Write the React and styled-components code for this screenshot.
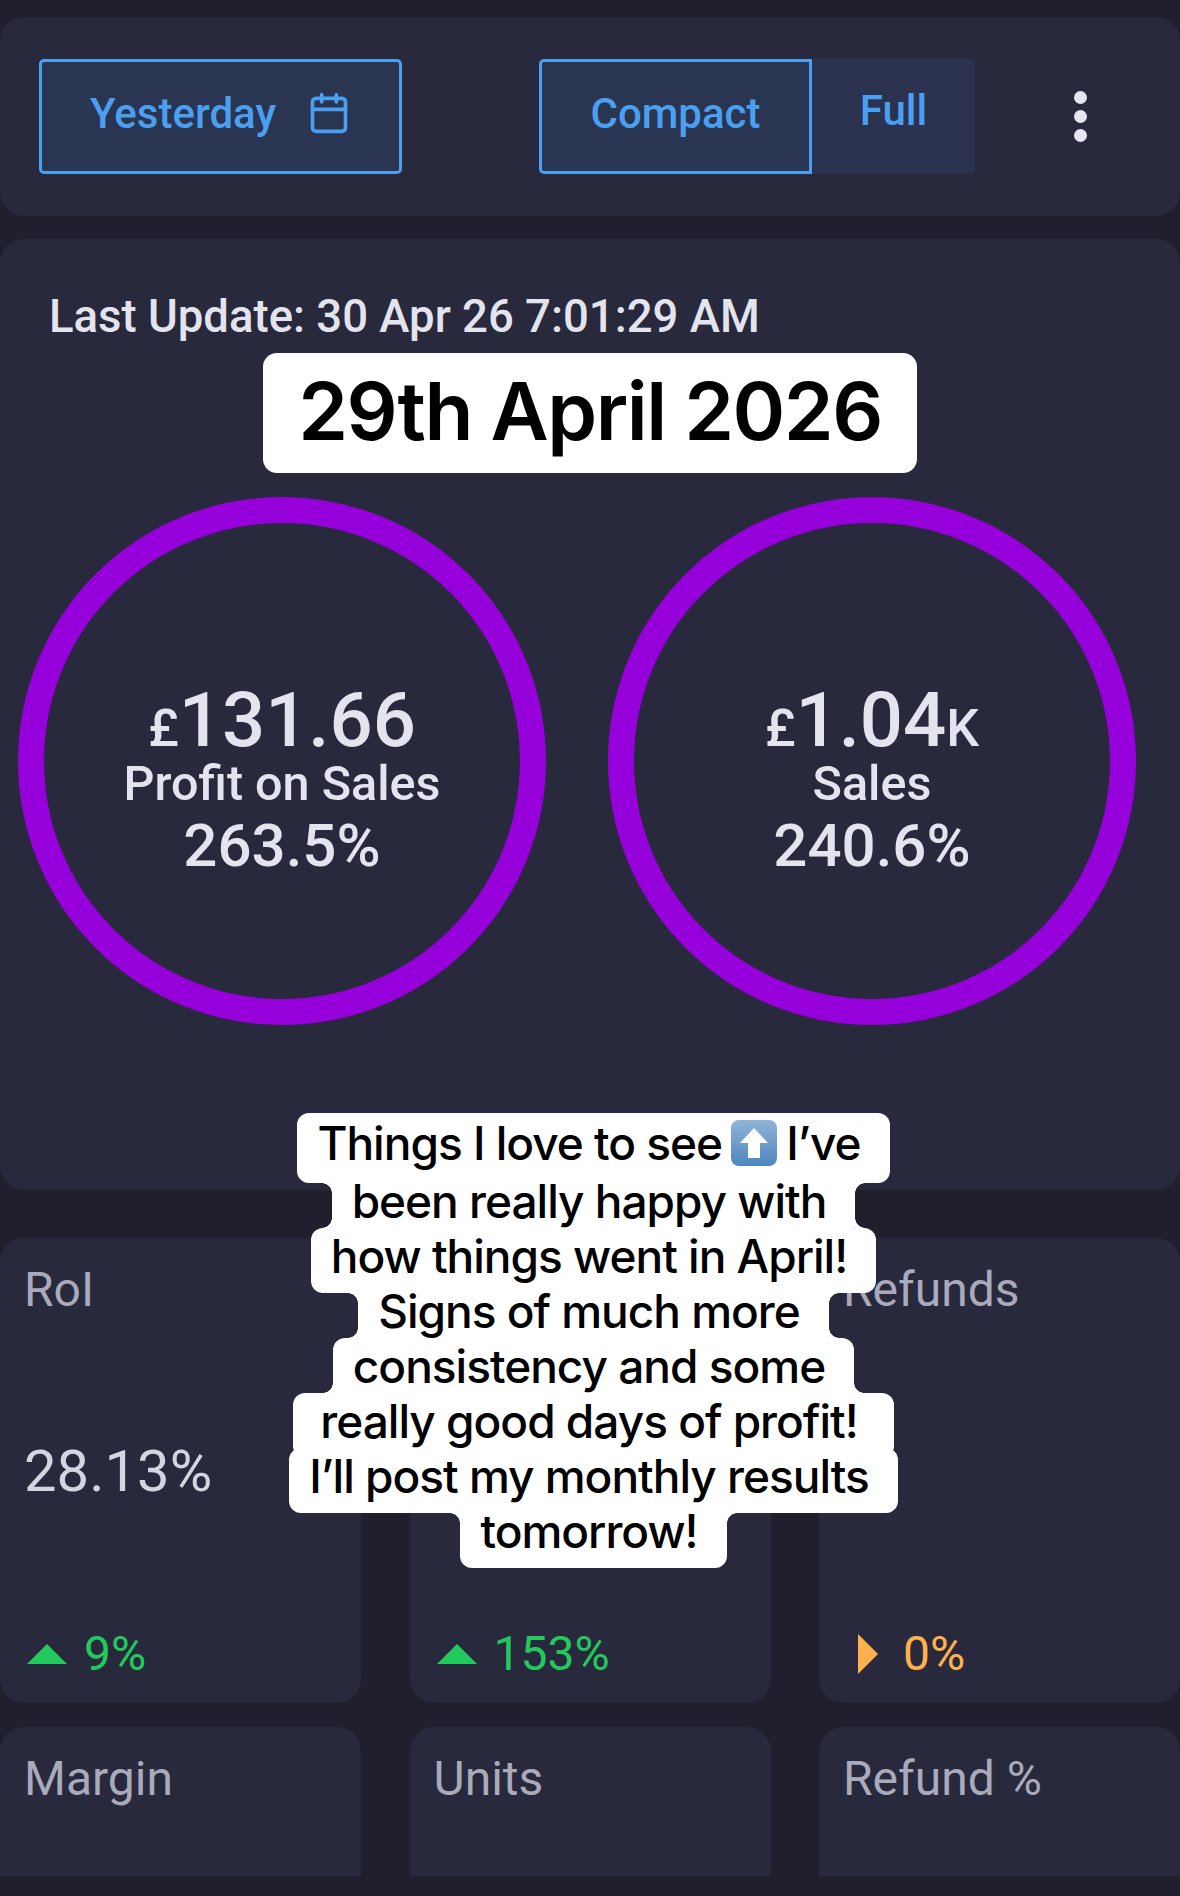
import React from 'react';
import styled, { createGlobalStyle, css } from 'styled-components';
import { Calendar } from 'lucide-react';

const GlobalStyle = createGlobalStyle`
  html, body {
    margin: 0;
    padding: 0;
    background: #1f1f2e;
    font-family: Roboto, "Liberation Sans", sans-serif;
  }
`;

const Page = styled.div`
  position: relative;
  width: 1180px;
  height: 1896px;
  overflow: hidden;
  padding-top: 17px;
  box-sizing: border-box;
`;

const TopBar = styled.div`
  height: 199px;
  background: #28293c;
  border-radius: 24px;
  display: flex;
  align-items: center;
  padding: 0 0 0 39px;
  margin-bottom: 23px;
  box-sizing: border-box;
`;

const RangeButton = styled.div`
  width: 363px;
  height: 115px;
  box-sizing: border-box;
  border: 3px solid #4da0f0;
  border-radius: 5px;
  background: #2a3552;
  color: #4a9ff0;
  font-size: 42px;
  font-weight: 500;
  display: flex;
  align-items: center;
  gap: 31px;
  padding: 0 0 7px 48px;
`;

const Toggle = styled.div`
  display: flex;
  margin-left: 137px;
`;

const ToggleItem = styled.div`
  height: 115px;
  box-sizing: border-box;
  width: ${(p) => (p.$active ? '273px' : '163px')};
  border: ${(p) => (p.$active ? '3px solid #4da0f0' : 'none')};
  border-radius: ${(p) => (p.$active ? '5px 0 0 5px' : '0 5px 5px 0')};
  background: ${(p) => (p.$active ? '#2a3552' : '#2b3250')};
  color: #4a9ff0;
  font-size: 42px;
  font-weight: 500;
  display: flex;
  justify-content: center;
  align-items: center;
  padding-bottom: ${(p) => (p.$active ? '7px' : '12px')};
`;

const MoreDots = styled.div`
  margin-left: 99px;
  display: flex;
  flex-direction: column;
  gap: 6px;
  span {
    width: 13px;
    height: 13px;
    border-radius: 50%;
    background: #e6e6f0;
  }
`;

const Overview = styled.div`
  position: relative;
  height: 951px;
  background: #28293c;
  border-radius: 24px;
  padding: 53px 0 0 49px;
  margin-bottom: 48px;
  box-sizing: border-box;
`;

const LastUpdate = styled.div`
  color: #e4e4ee;
  font-size: 45.5px;
  font-weight: 500;
  line-height: 50px;
`;

const DateBadge = styled.div`
  position: absolute;
  top: 114px;
  left: 263px;
  width: 654px;
  height: 120px;
  padding-bottom: 6px;
  box-sizing: border-box;
  background: #fff;
  border-radius: 14px;
  color: #000;
  font-family: Inter, "Liberation Sans", sans-serif;
  font-size: 80px;
  font-weight: 600;
  letter-spacing: -1.5px;
  display: flex;
  align-items: center;
  justify-content: center;
`;

const Rings = styled.div`
  display: flex;
  gap: 62px;
  margin: 155px 0 0 -31px;
`;

const Ring = styled.div`
  width: 528px;
  height: 528px;
  box-sizing: border-box;
  border: 26px solid #9600da;
  border-radius: 50%;
  display: flex;
  flex-direction: column;
  align-items: center;
  justify-content: center;
  padding-top: 38px;
  color: #e4e4ee;
`;

const Amount = styled.div`
  font-size: 76px;
  font-weight: 500;
  line-height: 70px;
  position: relative;
  top: 6px;
  small {
    font-size: 52px;
  }
`;

const RingLabel = styled.div`
  font-size: 48.5px;
  font-weight: 500;
  line-height: 52px;
`;

const RingPercent = styled.div`
  font-size: 60px;
  font-weight: 500;
  line-height: 72px;
`;

const MetricGrid = styled.div`
  display: grid;
  grid-template-columns: 361px 361px 361px;
  grid-template-rows: 465px 149px;
  column-gap: 48.5px;
  row-gap: 24px;
`;

const MetricCard = styled.div`
  background: #28293c;
  border-radius: ${(p) => (p.$cut ? '24px 24px 0 0' : '24px')};
  padding: 23px 24px 0;
  box-sizing: border-box;
  display: flex;
  flex-direction: column;
`;

const MetricLabel = styled.div`
  color: #a9aabb;
  font-size: 48px;
  line-height: 58px;
  height: 58px;
`;

const MetricValue = styled.div`
  color: #d4d5e0;
  font-size: 58px;
  line-height: 70px;
  height: 70px;
  margin-top: 117px;
`;

const Trend = styled.div`
  display: flex;
  align-items: center;
  margin-top: 119px;
  font-size: 48px;
  line-height: 58px;
  color: ${(p) => (p.$flat ? '#ffb14e' : '#22c95c')};
`;

const TrendUp = styled.span`
  width: 0;
  height: 0;
  margin: 0 17px 0 3px;
  border-left: 20px solid transparent;
  border-right: 20px solid transparent;
  border-bottom: 20px solid #22c95c;
`;

const TrendFlat = styled.span`
  width: 0;
  height: 0;
  margin: 0 25px 0 15px;
  border-top: 20px solid transparent;
  border-bottom: 20px solid transparent;
  border-left: 20px solid #ffb14e;
`;

// the story caption sits on top of the cards
const Caption = styled.div`
  position: absolute;
  top: 1113px;
  left: 7px;
  width: 1173px;
  display: flex;
  flex-direction: column;
  align-items: center;
  font-family: Inter, "Liberation Sans", sans-serif;
  font-size: 46px;
  font-weight: 500;
  letter-spacing: -1px;
  color: #000;
`;

// concave corners where a narrow line meets a wider neighbour
const filletTop = css`
  &::before {
    content: '';
    position: absolute;
    top: 10px;
    left: -10px;
    right: -10px;
    height: 10px;
    background:
      radial-gradient(circle at 0 100%, transparent 9.5px, #fff 10px) left / 10px 10px no-repeat,
      radial-gradient(circle at 100% 100%, transparent 9.5px, #fff 10px) right / 10px 10px no-repeat;
  }
`;

const filletBottom = css`
  &::after {
    content: '';
    position: absolute;
    top: 45px;
    left: -10px;
    right: -10px;
    height: 10px;
    background:
      radial-gradient(circle at 0 0, transparent 9.5px, #fff 10px) left / 10px 10px no-repeat,
      radial-gradient(circle at 100% 0, transparent 9.5px, #fff 10px) right / 10px 10px no-repeat;
  }
`;

const CaptionLine = styled.div`
  position: relative;
  display: flex;
  align-items: center;
  gap: 9px;
  height: ${(p) => (p.$first ? '70px' : '65px')};
  margin-bottom: -10px;
  padding: ${(p) => (p.$wide ? '0 36px 10px 27px' : '0 29px 10px 20px')};
  box-sizing: border-box;
  background: #fff;
  border-radius: 12px;
  white-space: nowrap;
  ${(p) => p.$narrowTop && filletTop}
  ${(p) => p.$narrowBottom && filletBottom}
`;

const UpEmoji = () => (
  <svg width="46" height="46" viewBox="0 0 46 46">
    <defs>
      <linearGradient id="emojiBlue" x1="0" y1="0" x2="0" y2="1">
        <stop offset="0" stopColor="#8fb4d9" />
        <stop offset="1" stopColor="#4f86bf" />
      </linearGradient>
    </defs>
    <rect width="46" height="46" rx="8" fill="url(#emojiBlue)" />
    <path d="M23 8 L37 23 H29 V38 H17 V23 H9 Z" fill="#fff" />
  </svg>
);

const App = () => {
  return (
    <>
      <GlobalStyle />
      <Page>
        <TopBar>
          <RangeButton>
            Yesterday
            <Calendar size={44} strokeWidth={2} />
          </RangeButton>
          <Toggle>
            <ToggleItem $active>Compact</ToggleItem>
            <ToggleItem>Full</ToggleItem>
          </Toggle>
          <MoreDots>
            <span />
            <span />
            <span />
          </MoreDots>
        </TopBar>

        <Overview>
          <LastUpdate>Last Update: 30 Apr 26 7:01:29 AM</LastUpdate>
          <DateBadge>29th April 2026</DateBadge>
          <Rings>
            <Ring>
              <Amount>
                <small>£</small>131.66
              </Amount>
              <RingLabel>Profit on Sales</RingLabel>
              <RingPercent>263.5%</RingPercent>
            </Ring>
            <Ring>
              <Amount>
                <small>£</small>1.04<small>K</small>
              </Amount>
              <RingLabel>Sales</RingLabel>
              <RingPercent>240.6%</RingPercent>
            </Ring>
          </Rings>
        </Overview>

        <MetricGrid>
          <MetricCard>
            <MetricLabel>RoI</MetricLabel>
            <MetricValue>28.13%</MetricValue>
            <Trend>
              <TrendUp />
              9%
            </Trend>
          </MetricCard>
          <MetricCard>
            <MetricLabel />
            <MetricValue />
            <Trend>
              <TrendUp />
              153%
            </Trend>
          </MetricCard>
          <MetricCard>
            <MetricLabel>Refunds</MetricLabel>
            <MetricValue />
            <Trend $flat>
              <TrendFlat />
              0%
            </Trend>
          </MetricCard>
          <MetricCard $cut>
            <MetricLabel>Margin</MetricLabel>
          </MetricCard>
          <MetricCard $cut>
            <MetricLabel>Units</MetricLabel>
          </MetricCard>
          <MetricCard $cut>
            <MetricLabel>Refund %</MetricLabel>
          </MetricCard>
        </MetricGrid>

        <Caption>
          <CaptionLine $first>
            <span>Things I love to see</span>
            <UpEmoji />
            <span>I’ve</span>
          </CaptionLine>
          <CaptionLine $narrowTop $narrowBottom>been really happy with</CaptionLine>
          <CaptionLine>how things went in April!</CaptionLine>
          <CaptionLine $narrowTop $narrowBottom>Signs of much more</CaptionLine>
          <CaptionLine $narrowBottom>consistency and some</CaptionLine>
          <CaptionLine $wide>really good days of profit!</CaptionLine>
          <CaptionLine>I’ll post my monthly results</CaptionLine>
          <CaptionLine $narrowTop>tomorrow!</CaptionLine>
        </Caption>
      </Page>
    </>
  );
};

export default App;
